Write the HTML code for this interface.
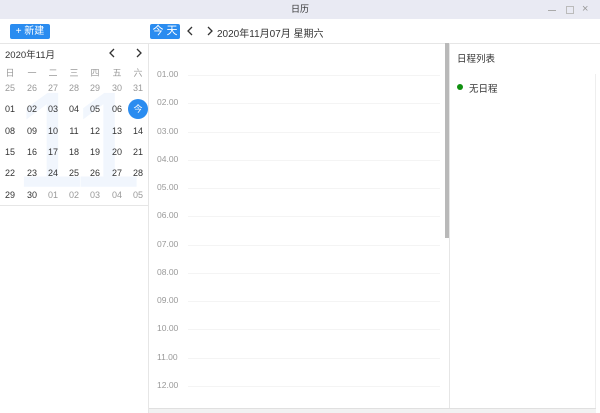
<!DOCTYPE html>
<html><head><meta charset="utf-8"><style>
*{margin:0;padding:0;box-sizing:border-box}
body{width:600px;height:413px;overflow:hidden;background:#fff;font-family:"Liberation Sans","Noto Sans CJK SC",sans-serif;position:relative;color:#333}
.abs{position:absolute}
.title{left:0;top:0;width:600px;height:19px;background:#e9eaf3;font-size:9px;text-align:center;line-height:19px;color:#333}
.btn{background:#2a8cf0;color:#fff;font-size:10px;border-radius:2px;text-align:center}
.cell{position:absolute;width:21px;text-align:center;font-size:9px;line-height:12px;transform:translateX(-50%)}
.hr{position:absolute;left:157px;font-size:8.5px;color:#999}
.ln{position:absolute;left:188px;width:252px;height:1px;background:#f4f4f4}
</style></head><body>
<div class="abs title">日历</div>
<div class="abs" style="left:548px;top:10px;width:8px;height:1px;background:#aaa"></div>
<div class="abs" style="left:566px;top:6px;width:8px;height:8px;border:1px solid #bbb"></div>
<div class="abs" style="left:582px;top:3px;font-size:11px;color:#999">×</div>

<div class="abs btn" style="left:10px;top:24px;width:40px;height:15px;line-height:15px">+ 新建</div>
<div class="abs btn" style="left:150px;top:24px;width:30px;height:15px;line-height:15px;font-size:11px">今 天</div>
<svg class="abs" style="left:186px;top:26px" width="30" height="10"><path d="M6 1L2 5L6 9M22 1L26 5L22 9" stroke="#333" stroke-width="1.3" fill="none"/></svg>
<div class="abs" style="left:217px;top:25px;font-size:10px;color:#333">2020年11月07月 星期六</div>

<div class="abs" style="left:0;top:43px;width:600px;height:1px;background:#e6e6e6"></div>
<div class="abs" style="left:148px;top:43px;width:1px;height:370px;background:#e6e6e6"></div>
<div class="abs" style="left:0;top:205px;width:148px;height:1px;background:#e6e6e6"></div>
<div class="abs" style="left:445px;top:43px;width:4px;height:195px;background:#b9b9b9"></div>
<div class="abs" style="left:449px;top:43px;width:1px;height:370px;background:#e6e6e6"></div>
<div class="abs" style="left:595px;top:74px;width:1px;height:335px;background:#eee"></div>
<div class="abs" style="left:149px;top:408px;width:447px;height:5px;background:#f2f2f2;border-top:1px solid #e0e0e0"></div>

<div class="abs" style="left:14px;top:66px;font-size:130px;line-height:140px;color:#f1f6fd;letter-spacing:-6px;transform:scaleY(1.05);transform-origin:top">11</div>

<div class="abs" style="left:5px;top:47px;font-size:9.5px">2020年11月</div>
<svg class="abs" style="left:108px;top:48px" width="36" height="10"><path d="M6 1L2 5L6 9M29 1L33 5L29 9" stroke="#333" stroke-width="1.3" fill="none"/></svg>

<div id="cal"></div>
<div class="abs" style="left:128px;top:99px;width:20px;height:20px;border-radius:50%;background:#2a8cf0;color:#fff;font-size:9px;text-align:center;line-height:20px">今</div>

<div id="hrs"></div>

<div class="abs" style="left:457px;top:51px;font-size:9.5px">日程列表</div>
<div class="abs" style="left:457px;top:84px;width:6px;height:6px;border-radius:50%;background:#109010"></div>
<div class="abs" style="left:469px;top:81px;font-size:9.5px">无日程</div>

<script>
var xs=[10,32,53,74,95,117,138];
var wd=["日","一","二","三","四","五","六"];
var rows=[["25","26","27","28","29","30","31"],["01","02","03","04","05","06",""],["08","09","10","11","12","13","14"],["15","16","17","18","19","20","21"],["22","23","24","25","26","27","28"],["29","30","01","02","03","04","05"]];
var h="";
for(var i=0;i<7;i++)h+='<div class="cell" style="left:'+xs[i]+'px;top:67px;color:#999">'+wd[i]+'</div>';
for(var r=0;r<6;r++)for(var i=0;i<7;i++){var g=(r==0)||(r==5&&i>1);h+='<div class="cell" style="left:'+xs[i]+'px;top:'+(82+r*21.3)+'px;color:'+(g?'#999':'#333')+'">'+rows[r][i]+'</div>';}
document.getElementById("cal").innerHTML=h;
var s="";
for(var k=1;k<=12;k++){var y=75+(k-1)*28.27;s+='<div class="hr" style="top:'+(y-6)+'px">'+(k<10?'0':'')+k+'.00</div><div class="ln" style="top:'+y+'px"></div>';}
document.getElementById("hrs").innerHTML=s;
</script>
</body></html>
